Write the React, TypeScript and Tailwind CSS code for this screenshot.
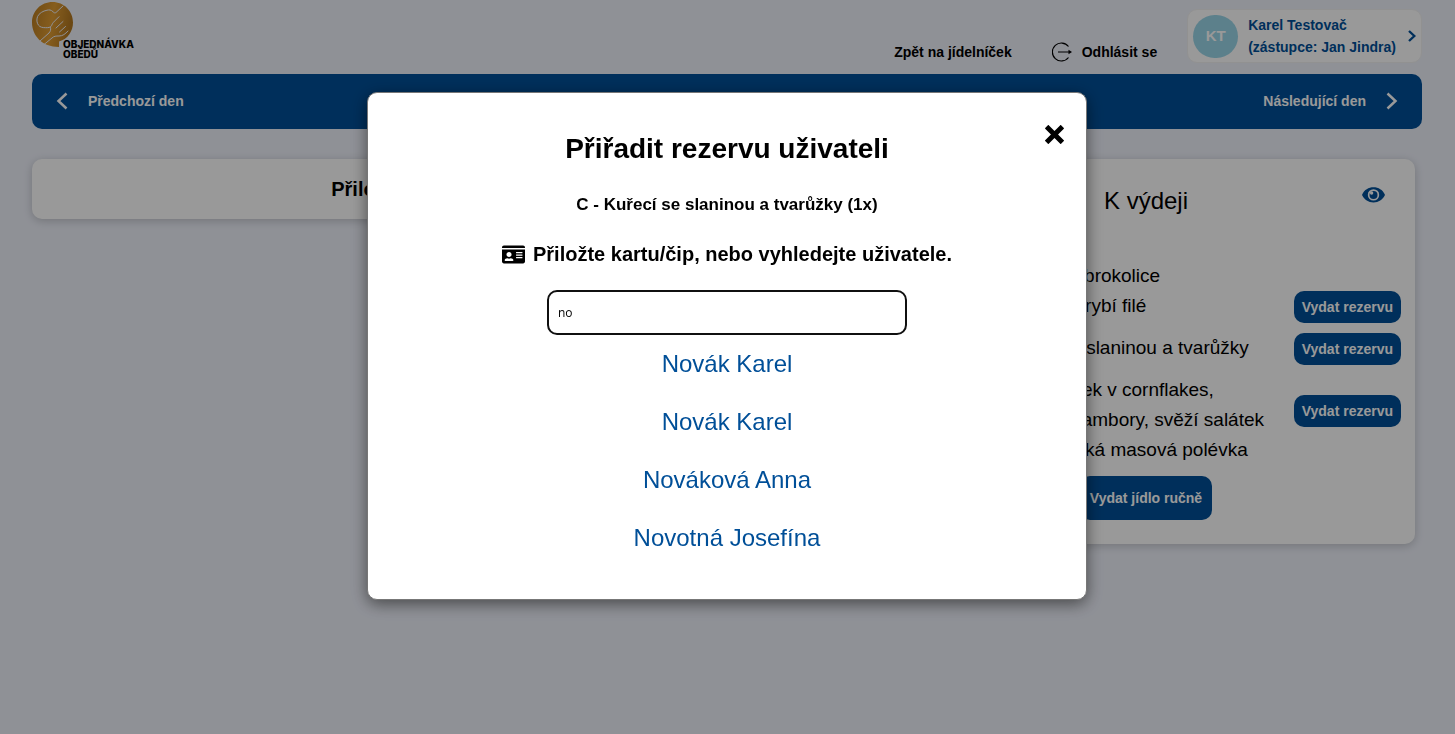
import { FaIdCard } from "react-icons/fa";
import { ImCross } from "react-icons/im";

const users = [
  { id: 1, name: "Novák Karel" },
  { id: 2, name: "Novák Karel" },
  { id: 3, name: "Nováková Anna" },
  { id: 4, name: "Novotná Josefína" },
];

const meals = [
  { lines: ["A - Polenta a brokolice"], reserve: false },
  { lines: ["B - Smažené rybí filé"], reserve: true },
  { lines: ["C - Kuřecí se slaninou a tvarůžky"], reserve: true },
  {
    lines: ["D - Kuřecí řízek v cornflakes,", "šťouchané brambory, svěží salátek"],
    reserve: true,
  },
  { lines: ["Polévka: Selská masová polévka"], reserve: false },
];

function Logo() {
  return (
    <a href="#" className="relative block h-[60px] w-[110px]" aria-label="Objednávka obědů">
      <svg width="42" height="48" viewBox="0 0 42 48" fill="none">
        <defs>
          <linearGradient id="gold" x1="0" y1="0" x2="1" y2="0.2">
            <stop offset="0" stopColor="#b87b20" />
            <stop offset="0.55" stopColor="#e09c33" />
            <stop offset="1" stopColor="#b37820" />
          </linearGradient>
        </defs>
        <path
          d="M20.5 2C9 2 0 11 0 22.5c0 13 10 24.5 27 24.5V41.5C36 39 41 31 41 22.5 41 11 32 2 20.5 2Z"
          fill="url(#gold)"
        />
        <g stroke="#eff2fb" strokeWidth="1" strokeLinecap="round" strokeLinejoin="round">
          <path d="M31 6l-7 6.5c-1 .8-2 .3-3-.8-2-2-4-2-6-1.5-4 .8-8 3-9.500 6.500-1 3-.8 6 1 8.500 1.500 2 4 2.500 7 2.500 2.500 0 5 0 6-2 .6-1.500 1-2.500 2-3.500l5.500-5.500" />
          <path d="M18.5 27.5c.5 2 0 4-1.500 5.500l-9 8M31 21.500l-7 6.500M33.500 26.500l-6 5.500M36 31c-3 3-5 5-9 5-3 0-5 0-7 2l-8 6.500" />
        </g>
      </svg>
      <span className="absolute top-[39px] left-[31px] font-['Inter',sans-serif] text-[10px] leading-[10px] font-extrabold text-black">
        OBJEDNÁVKA
        <br />
        OBĚDŮ
      </span>
    </a>
  );
}

function Chevron({ className, flip = false, stroke = 2.5 }: { className: string; flip?: boolean; stroke?: number }) {
  return (
    <svg className={className} viewBox="0 0 12 18" fill="none" stroke="currentColor" strokeWidth={stroke}>
      <path d={flip ? "M10.5 1.5 2.5 9l8 7.5" : "M1.5 1.5 9.5 9l-8 7.5"} />
    </svg>
  );
}

function Eye() {
  return (
    <svg width="23" height="16" viewBox="0 0 23 16" fill="currentColor">
      <path d="M11.5 0.300C6.500 0.300 2.300 3 .3 7.200a1.500 1.500 0 0 0 0 1.400c2 4.200 6.200 6.900 11.200 6.900s9.200-2.700 11.200-6.900a1.500 1.500 0 0 0 0-1.400C20.700 3 16.500.3 11.500.3Z" />
      <circle cx="11.5" cy="7.900" r="5.700" fill="#fff" />
      <circle cx="11.5" cy="7.900" r="4" />
      <circle cx="9.600" cy="6" r="1.700" fill="#fff" />
    </svg>
  );
}

function Header() {
  return (
    <header className="flex h-[74px] items-start justify-between">
      <Logo />
      <div className="flex items-start text-sm font-bold">
        <nav className="mt-[42px] flex items-center gap-10 leading-5 text-black">
          <a href="#">Zpět na jídelníček</a>
          <a href="#" className="flex items-center gap-2.5">
            <svg className="size-5" viewBox="0 0 20 20" fill="none" stroke="currentColor" strokeWidth="1.2">
              <path d="M16.5 4.5a9 9 0 1 0 0 11M6 10h12" />
              <path d="m16.5 7.8 3.500 2.200-3.500 2.200Z" fill="currentColor" stroke="none" />
            </svg>
            Odhlásit se
          </a>
        </nav>
        <button
          type="button"
          className="mt-[9px] ml-[30px] flex items-center rounded-[10px] border border-[#f2f2f2] bg-white px-[5px] py-1 text-left text-[#004f98]"
        >
          <span className="flex h-[43px] w-[45px] items-center justify-center rounded-full bg-[#9ad6e8] text-[15px] text-white">
            KT
          </span>
          <span className="ml-2.5 leading-[22px]">
            Karel Testovač
            <br />
            (zástupce: Jan Jindra)
          </span>
          <Chevron className="ml-3 h-3 w-2" stroke={3.5} />
        </button>
      </div>
    </header>
  );
}

function Reservations() {
  return (
    <section className="relative w-[538px] rounded-[10px] bg-white py-6 text-center shadow-[0_2px_10px_rgba(0,0,0,0.2)]">
      <h2 className="text-2xl leading-9">K výdeji</h2>
      <button type="button" aria-label="Zobrazit" className="absolute top-7 right-[30px] text-[#004f98]">
        <Eye />
      </button>
      <ul className="mt-[42px] pr-3.5 pl-[93px] text-left text-[19px] leading-[30px]">
        {meals.map((meal) => (
          <li key={meal.lines[0]} className="flex items-start justify-between">
            <span className={meal.reserve && meal.lines.length === 1 ? "pb-3" : ""}>
              {meal.lines.map((line) => (
                <span key={line} className="block whitespace-nowrap">
                  {line}
                </span>
              ))}
            </span>
            {meal.reserve && (
              <button
                type="button"
                className={`h-8 rounded-[10px] bg-[#004f98] px-2 text-sm font-bold text-white ${
                  meal.lines.length > 1 ? "mt-5" : ""
                }`}
              >
                Vydat rezervu
              </button>
            )}
          </li>
        ))}
      </ul>
      <button type="button" className="mt-[11px] h-11 rounded-[10px] bg-[#004f98] px-2.5 text-sm font-bold text-white">
        Vydat jídlo ručně
      </button>
    </section>
  );
}

function AssignDialog() {
  return (
    <div className="fixed inset-0 flex items-start justify-center bg-black/40 pt-[92px] pr-[17px] pl-4">
      <div
        role="dialog"
        aria-modal="true"
        aria-labelledby="assign-title"
        className="relative w-full max-w-[720px] rounded-[10px] border border-[#777] bg-white pt-[38px] pb-8 text-center shadow-[0_4px_16px_rgba(0,0,0,0.5)]"
      >
        <button type="button" aria-label="Zavřít" className="absolute top-8 right-[22px]">
          <ImCross className="size-[19px]" />
        </button>
        <h1 id="assign-title" className="text-[28px] leading-9 font-bold">
          Přiřadit rezervu uživateli
        </h1>
        <p className="mt-[26px] text-[17px] leading-6 font-bold">C - Kuřecí se slaninou a tvarůžky (1x)</p>
        <label htmlFor="user" className="mt-[23px] flex items-center justify-center gap-2 text-xl leading-7 font-bold">
          <FaIdCard className="size-[23px]" />
          Přiložte kartu/čip, nebo vyhledejte uživatele.
        </label>
        <input
          id="user"
          type="text"
          defaultValue="no"
          className="mt-[22px] h-[45px] w-[360px] max-w-full rounded-[10px] border-2 border-[#101010] px-[9px] font-['Open_Sans',sans-serif] text-xs outline-none"
        />
        <ul className="text-2xl leading-[58px] text-[#004f98]">
          {users.map((user) => (
            <li key={user.id}>
              <a href="#">{user.name}</a>
            </li>
          ))}
        </ul>
      </div>
    </div>
  );
}

export default function App() {
  return (
    <div className="min-h-screen bg-[#eff2fb] pr-[33px] pl-8 font-['Liberation_Sans',Arial,sans-serif] text-black">
      <Header />
      <div className="flex h-[55px] items-center justify-between rounded-[10px] bg-[#004f98] px-6 pb-0.5 text-sm font-bold text-white">
        <button type="button" className="flex items-center gap-5">
          <Chevron flip className="h-[18px] w-3" />
          Předchozí den
        </button>
        <button type="button" className="flex items-center gap-5">
          Následující den
          <Chevron className="h-[18px] w-3" />
        </button>
      </div>
      <main className="mt-[30px] flex items-start justify-between pr-[7px]">
        <section className="mr-8 flex-1 rounded-[10px] bg-white py-4 text-center shadow-[0_2px_10px_rgba(0,0,0,0.2)]">
          <h2 className="text-xl leading-7 font-bold">Přiložte kartu nebo čip</h2>
        </section>
        <Reservations />
      </main>
      <AssignDialog />
    </div>
  );
}
